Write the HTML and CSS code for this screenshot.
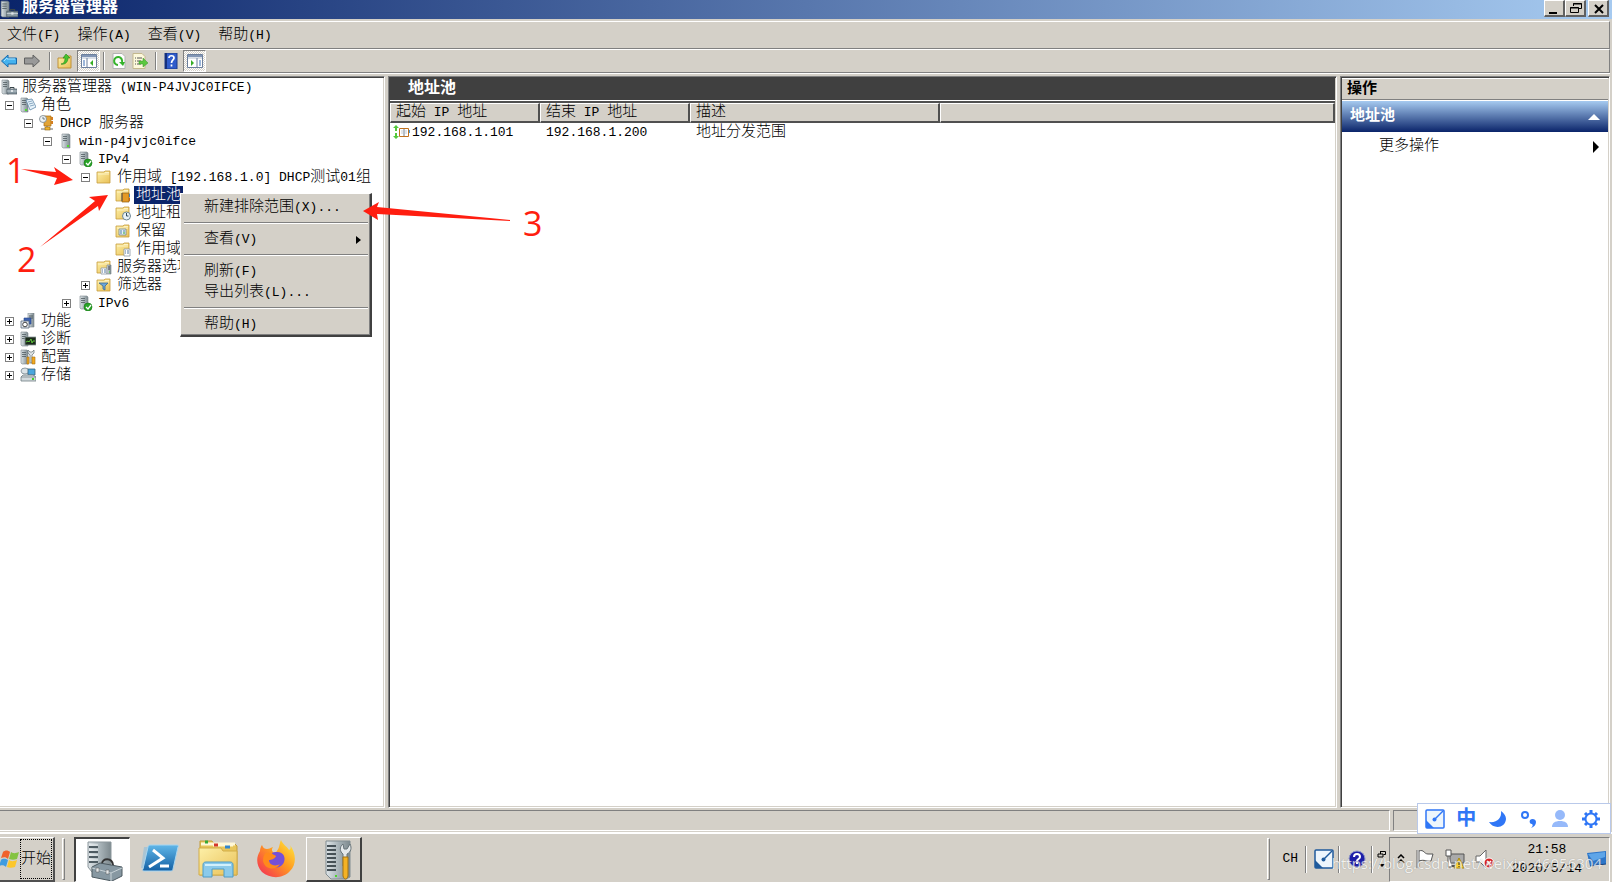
FILE: index.html
```
<!DOCTYPE html>
<html lang="zh-CN">
    <head>
        <meta charset="utf-8">
        <title>服务器管理器</title>
        <link rel="stylesheet" href="styles.css">
    </head>
    <body>
        <svg class="defs" width="0" height="0">
            <defs>
                <linearGradient id="gMetal" x1="0" x2="1"><stop offset="0" stop-color="#dfe5e8"/><stop offset=".5" stop-color="#aab5ba"/><stop offset="1" stop-color="#7d898e"/></linearGradient>
                <linearGradient id="gFolder" x1="0" y1="0" x2="1" y2="1"><stop offset="0" stop-color="#fdf0a8"/><stop offset="1" stop-color="#e9c057"/></linearGradient>
                <linearGradient id="gBlue" x1="0" y1="0" x2="0" y2="1"><stop offset="0" stop-color="#5fb6e8"/><stop offset="1" stop-color="#1460a4"/></linearGradient>
                <linearGradient id="gFox" x1="1" y1="0" x2="0" y2="1"><stop offset="0" stop-color="#fff044"/><stop offset=".45" stop-color="#ff9a1f"/><stop offset="1" stop-color="#f3245c"/></linearGradient>
            </defs>
            <symbol id="tower" viewBox="0 0 16 16">
                <path d="M4 1h7l1 1v13H5l-1-1z" fill="url(#gMetal)" stroke="#7c888d" stroke-width=".6"/>
                <path d="M5 3.500h4M5 5.500h4M5 7.500h4" stroke="#4f5b60" stroke-width=".8"/>
                <rect x="9" y="12" width="2" height="2" fill="#4fdc2e"/>
            </symbol>
            <symbol id="tower-left" viewBox="0 0 16 16">
                <path d="M1 1h6l1 1v13H2l-1-1z" fill="url(#gMetal)" stroke="#7c888d" stroke-width=".6"/>
                <path d="M2 3.500h4M2 5.500h4M2 7.500h4" stroke="#4f5b60" stroke-width=".8"/>
            </symbol>
            <symbol id="manager" viewBox="0 0 16 16">
                <use href="#tower-left"/>
                <path d="M9 10V8.500h4V10" fill="none" stroke="#39454a"/>
                <path d="M6 10h10v5H6z" fill="#8797a0" stroke="#4d5a61" stroke-width=".7"/>
                <path d="M6 12h10" stroke="#d0d8dc" stroke-width=".7"/>
                <path d="M10 11h2v2h-2z" fill="#dfe5e8"/>
            </symbol>
            <symbol id="roles" viewBox="0 0 16 16">
                <use href="#tower-left"/>
                <path d="M6 3l6-1 4 8-6 3z" fill="#e8f3fb" stroke="#5f88a8" stroke-width=".8"/>
                <path d="M8 5l4-1M9 7l4-1M10 9l4-1" stroke="#5f88a8" stroke-width=".7"/>
                <rect x="5" y="12" width="2" height="2" fill="#4fdc2e"/>
            </symbol>
            <symbol id="dhcp" viewBox="0 0 16 16">
                <path d="M5 1h7v10H5z" fill="#e2a437" stroke="#a66b13" stroke-width=".7"/>
                <path d="M12 2h2v3h-2zM12 6h2v3h-2z" fill="#d47e20"/>
                <path d="M8 11v3M2 14h12" stroke="#6b6b6b"/>
                <rect x="6" y="12" width="5" height="3" fill="#f0b32e" stroke="#8d6412" stroke-width=".6"/>
                <circle cx="4" cy="4" r="3.500" fill="#eef4f7" stroke="#74828a" stroke-width=".8"/>
                <path d="M4 2v2h2" fill="none" stroke="#40525c" stroke-width=".7"/>
            </symbol>
            <symbol id="tower-ok" viewBox="0 0 16 16">
                <path d="M3 1h7l1 1v12H4l-1-1z" fill="url(#gMetal)" stroke="#7c888d" stroke-width=".6"/>
                <path d="M4 3.500h4M4 5.500h4M4 7.500h4" stroke="#4f5b60" stroke-width=".8"/>
                <circle cx="11" cy="12" r="4" fill="#28a428" stroke="#12730f" stroke-width=".6"/>
                <path d="M9 12l2 2 3-4" fill="none" stroke="#fff" stroke-width="1.300"/>
            </symbol>
            <symbol id="folder" viewBox="0 0 16 16">
                <path d="M1 3h7l1-1h5v12H1z" fill="url(#gFolder)" stroke="#c79c3c" stroke-width=".8"/>
                <path d="M9 3.500h4M2 5h11" stroke="#fff8d2" stroke-width=".8"/>
            </symbol>
            <symbol id="pool" viewBox="0 0 16 16">
                <use href="#folder"/>
                <path d="M7 6h7v9H7z" fill="#e59a25" stroke="#8d5c10" stroke-width=".7"/>
                <path d="M6 7h2M6 9h2M6 11h2M6 13h2" stroke="#555"/>
                <path d="M14 7h1v3h-1z" fill="#3f82c4"/><path d="M14 11h1v3h-1z" fill="#c0641d"/>
            </symbol>
            <symbol id="lease" viewBox="0 0 16 16">
                <use href="#folder"/>
                <circle cx="11.500" cy="11" r="4" fill="#e8f2f8" stroke="#6d8795"/>
                <path d="M11.500 8v3h2" fill="none" stroke="#304b5c"/>
            </symbol>
            <symbol id="reserve" viewBox="0 0 16 16">
                <use href="#folder"/>
                <path d="M4 6h7v6H4z" fill="#e7f0f4" stroke="#71858f" stroke-width=".8"/>
                <path d="M5 8h2M8 8h2M5 10h2" stroke="#4a7eb0"/><path d="M8 10h2" stroke="#2ca12c"/>
            </symbol>
            <symbol id="options" viewBox="0 0 16 16">
                <use href="#folder"/>
                <path d="M9 8h6v7H9z" fill="#fff" stroke="#8b97a3" stroke-width=".8"/>
                <path d="M10 10h1M12 10h2M10 12h1M12 12h2" stroke="#5576a0"/>
            </symbol>
            <symbol id="srv-options" viewBox="0 0 16 16">
                <use href="#folder"/>
                <path d="M5 9h6v6H5z" fill="#fff" stroke="#8b97a3" stroke-width=".8"/>
                <path d="M6 11h1M8 11h2M6 13h1M8 13h2" stroke="#5576a0"/>
                <path d="M11 6h4v9h-4z" fill="url(#gMetal)" stroke="#707c81" stroke-width=".6"/>
                <path d="M12 8h2M12 10h2" stroke="#445"/><path d="M13 13h1" stroke="#3fdc2e"/>
            </symbol>
            <symbol id="filter" viewBox="0 0 16 16">
                <use href="#folder"/>
                <path d="M3 6h9L9 9v4l-2-1V9z" fill="#6aa5da" stroke="#3b698f" stroke-width=".8"/>
            </symbol>
            <symbol id="features" viewBox="0 0 16 16">
                <path d="M8 0h6v14H8z" fill="url(#gMetal)" stroke="#7c888d" stroke-width=".6"/>
                <path d="M9 3h4M9 5h4" stroke="#4f5b60"/>
                <path d="M4 5h7v6H4z" fill="#3d62b0" stroke="#29468a" stroke-width=".6"/>
                <path d="M1 8h8v7H1z" fill="#e5eaf0" stroke="#59687a" stroke-width=".8"/>
                <circle cx="5" cy="11.500" r="2.300" fill="#fff" stroke="#444"/>
            </symbol>
            <symbol id="diag" viewBox="0 0 16 16">
                <use href="#tower-left"/>
                <path d="M5 6h11v8H5z" fill="#1c2b1c" stroke="#8b979b" stroke-width=".8"/>
                <path d="M6 11l2-1 1 1 2-3 1 4 1-2h2" fill="none" stroke="#62d03e" stroke-width=".9"/>
            </symbol>
            <symbol id="config" viewBox="0 0 16 16">
                <use href="#tower-left"/>
                <path d="M8 1v3l2 2v8h2V6l2-2V1l-2 2h-2z" fill="#dde3e6" stroke="#667277" stroke-width=".7"/>
                <path d="M7 8h2v7H7zM12 8h3v7h-3z" fill="#f1a91e" stroke="#a87010" stroke-width=".6"/>
            </symbol>
            <symbol id="storage" viewBox="0 0 16 16">
                <ellipse cx="5" cy="4" rx="4" ry="3" fill="#dbe3e7" stroke="#788890" stroke-width=".8"/>
                <path d="M8 2h7v6H8z" fill="#4aa6dd" stroke="#35627f" stroke-width=".8"/>
                <path d="M1 10l2-2h10l3 2v4H1z" fill="#d4dbde" stroke="#707d83" stroke-width=".8"/>
                <path d="M1 10h15" stroke="#707d83" stroke-width=".7"/><rect x="12" y="11" width="2" height="2" fill="#44cf2a"/>
            </symbol>
            <symbol id="panel" viewBox="0 0 16 16">
                <path d="M.5 1.500h15v13H.5z" fill="#fff" stroke="#6c7f9c"/>
                <path d="M1 2h14v2H1z" fill="#8296b5"/><path d="M1 5h14" stroke="#b4c0d2"/>
            </symbol>
            <symbol id="pen" viewBox="0 0 20 20">
                <rect x="1" y="1" width="18" height="18" rx="1" fill="#edf5fc" stroke="currentColor" stroke-width="1.500"/>
                <path d="M1 11l8 8H1z" fill="currentColor"/>
                <path d="M9 11l9-9" stroke="currentColor" stroke-width="1.500"/><circle cx="9.500" cy="10.500" r="2" fill="currentColor"/>
            </symbol>
        </svg>

        <header class="titlebar">
            <svg class="icon18"><use href="#manager"/></svg>
            <h1>服务器管理器</h1>
            <button class="win" aria-label="最小化"><svg width="16" height="13"><path d="M2 11h8" stroke="#000" stroke-width="2"/></svg></button>
            <button class="win" aria-label="还原"><svg width="16" height="13"><path d="M5.500 4V1.500h8v5H10M5 2h9" fill="none" stroke="#000"/><path d="M2.500 5.500h8v5h-8zM2 6h9" fill="none" stroke="#000"/></svg></button>
            <button class="win close" aria-label="关闭"><svg width="16" height="13"><path d="M4 3l8 8M12 3l-8 8" stroke="#000" stroke-width="2"/></svg></button>
        </header>

        <nav class="menubar">
            <button>文件<span class="en">(F)</span></button>
            <button>操作<span class="en">(A)</span></button>
            <button>查看<span class="en">(V)</span></button>
            <button>帮助<span class="en">(H)</span></button>
        </nav>

        <div class="toolbar">
            <button class="tool nav" aria-label="后退"><svg viewBox="0 0 16 16"><path d="M.5 8L7 2v3h8.500v6H7v3z" fill="#45b2ee" stroke="#1668ac"/><path d="M3 8l3-3v1h8" fill="none" stroke="#a8e2ff"/></svg></button>
            <button class="tool nav" aria-label="前进"><svg viewBox="0 0 16 16"><path d="M15.500 8L9 2v3H.5v6H9v3z" fill="#999" stroke="#606060"/></svg></button>
            <i class="bar"></i>
            <button class="tool" aria-label="向上"><svg viewBox="0 0 16 16"><path d="M1 5h6l1-2h6v12H1z" fill="url(#gFolder)" stroke="#c09038"/><path d="M4 11c3 0 4-3 4-6H6l3-4 4 4h-2c0 4-3 7-7 6z" fill="#46c52e" stroke="#26851b" stroke-width=".6"/></svg></button>
            <button class="tool on" aria-label="显示控制台树"><svg viewBox="0 0 16 16"><use href="#panel"/><path d="M6 5v9" stroke="#6c7f9c"/><path d="M2 8h2M2 10h2M2 12h2" stroke="#3b6fb5"/><path d="M12 7v6l-3-3z" fill="#37ad24"/></svg></button>
            <i class="bar"></i>
            <button class="tool" aria-label="刷新"><svg viewBox="0 0 16 16"><path d="M2 .5h9l3 3v12H2z" fill="#fdfdfd" stroke="#b3b3b3"/><path d="M7 12a4 4 0 1 1 4-3" fill="none" stroke="#35b32b" stroke-width="2"/><path d="M8 9h6l-2 4z" fill="#35b32b"/></svg></button>
            <button class="tool" aria-label="导出列表"><svg viewBox="0 0 16 16"><path d="M1 .5h9l3 3v12H1z" fill="#fdf9dc" stroke="#c4b98e"/><path d="M3 5h1M5 5h5M3 8h1M5 8h4M3 11h1M5 11h4" stroke="#555"/><path d="M7 8h4V5l5 5-5 4v-3H7z" fill="#5cc840" stroke="#37962b" stroke-width=".5"/></svg></button>
            <i class="bar"></i>
            <button class="tool" aria-label="帮助"><svg viewBox="0 0 16 16"><path d="M2 0h12v16H2z" fill="#2f5bcb" stroke="#1c3a8a"/><path d="M3 0v16" stroke="#15307c" stroke-width="2"/><path d="M6 5c0-3 5-3 5 0 0 2-2.500 2-2.500 5M8.500 11.500v2" fill="none" stroke="#fff" stroke-width="1.700"/></svg></button>
            <button class="tool on" aria-label="显示操作窗格"><svg viewBox="0 0 16 16"><use href="#panel"/><path d="M10 5v9" stroke="#6c7f9c"/><path d="M12 8h2M12 10h2M12 12h2" stroke="#3b6fb5"/><path d="M4 7v6l3-3z" fill="#37ad24"/></svg></button>
        </div>

        <main class="work">
            <section class="pane tree">
                <ul class="root">
                    <li><div class="node top"><svg class="ico"><use href="#manager"/></svg><span class="label">服务器管理器<span class="en"> (WIN-P4JVJC0IFCE)</span></span></div></li>
                    <li><div class="node"><button class="exp minus" aria-label="折叠"></button><svg class="ico"><use href="#roles"/></svg><span class="label">角色</span></div>
                        <ul>
                            <li><div class="node"><button class="exp minus" aria-label="折叠"></button><svg class="ico"><use href="#dhcp"/></svg><span class="label"><span class="en">DHCP </span>服务器</span></div>
                                <ul>
                                    <li><div class="node"><button class="exp minus" aria-label="折叠"></button><svg class="ico"><use href="#tower"/></svg><span class="label"><span class="en">win-p4jvjc0ifce</span></span></div>
                                        <ul>
                                            <li><div class="node"><button class="exp minus" aria-label="折叠"></button><svg class="ico"><use href="#tower-ok"/></svg><span class="label"><span class="en">IPv4</span></span></div>
                                                <ul>
                                                    <li><div class="node"><button class="exp minus" aria-label="折叠"></button><svg class="ico"><use href="#folder"/></svg><span class="label">作用域<span class="en"> [192.168.1.0] DHCP</span>测试<span class="en">01</span>组</span></div>
                                                        <ul>
                                                            <li><div class="node"><i class="noexp"></i><svg class="ico"><use href="#pool"/></svg><span class="label selected">地址池</span></div></li>
                                                            <li><div class="node"><i class="noexp"></i><svg class="ico"><use href="#lease"/></svg><span class="label">地址租用</span></div></li>
                                                            <li><div class="node"><i class="noexp"></i><svg class="ico"><use href="#reserve"/></svg><span class="label">保留</span></div></li>
                                                            <li><div class="node"><i class="noexp"></i><svg class="ico"><use href="#options"/></svg><span class="label">作用域选项</span></div></li>
                                                        </ul>
                                                    </li>
                                                    <li><div class="node"><i class="noexp"></i><svg class="ico"><use href="#srv-options"/></svg><span class="label">服务器选项</span></div></li>
                                                    <li><div class="node"><button class="exp" aria-label="展开"></button><svg class="ico"><use href="#filter"/></svg><span class="label">筛选器</span></div></li>
                                                </ul>
                                            </li>
                                            <li><div class="node"><button class="exp" aria-label="展开"></button><svg class="ico"><use href="#tower-ok"/></svg><span class="label"><span class="en">IPv6</span></span></div></li>
                                        </ul>
                                    </li>
                                </ul>
                            </li>
                        </ul>
                    </li>
                    <li><div class="node"><button class="exp" aria-label="展开"></button><svg class="ico"><use href="#features"/></svg><span class="label">功能</span></div></li>
                    <li><div class="node"><button class="exp" aria-label="展开"></button><svg class="ico"><use href="#diag"/></svg><span class="label">诊断</span></div></li>
                    <li><div class="node"><button class="exp" aria-label="展开"></button><svg class="ico"><use href="#config"/></svg><span class="label">配置</span></div></li>
                    <li><div class="node"><button class="exp" aria-label="展开"></button><svg class="ico"><use href="#storage"/></svg><span class="label">存储</span></div></li>
                </ul>
            </section>

            <section class="pane list">
                <h2 class="list-title">地址池</h2>
                <table>
                    <colgroup><col class="c-ip"><col class="c-ip"><col class="c-desc"><col></colgroup>
                    <thead>
                        <tr><th>起始<span class="en"> IP </span>地址</th><th>结束<span class="en"> IP </span>地址</th><th>描述</th><th></th></tr>
                    </thead>
                    <tbody>
                        <tr>
                            <td class="first"><svg width="18" height="16" viewBox="0 0 18 16"><path d="M3 0l3 3H4v3H2V3H0zM3 14l3-3H4V8H2v3H0z" fill="#54c83c"/><path d="M6.500 3.500h9v8h-9z" fill="#fff" stroke="#c0701c"/><path d="M11 4v7" stroke="#6f7f8f"/><path d="M8 6h2M8 8h2M12 6h2M12 8h2" stroke="#c3ccd4"/><path d="M16 5h1v3h-1z" fill="#3f9be0"/></svg><span class="en">192.168.1.101</span></td>
                            <td><span class="en">192.168.1.200</span></td>
                            <td>地址分发范围</td>
                            <td></td>
                        </tr>
                    </tbody>
                </table>
            </section>

            <aside class="pane actions">
                <h2 class="actions-title">操作</h2>
                <button class="group">地址池<svg width="12" height="6"><path d="M0 6l6-6 6 6z" fill="#fff"/></svg></button>
                <button class="more">更多操作<svg width="6" height="12"><path d="M0 0l6 6-6 6z"/></svg></button>
            </aside>
        </main>

        <div class="statusbar"><div class="cell grow"></div><div class="cell side"></div></div>

        <footer class="taskbar">
            <button class="start"><svg width="20" height="20" viewBox="0 0 20 20"><path d="M3 3c2-2 5-2 7 0L8 10C6 8 4 8 1 9z" fill="#f0622c"/><path d="M11 3c3 2 5 1 8 0l-2 7c-3 1-5 1-8 0z" fill="#84c341"/><path d="M1 11c2-2 5-1 7 0l-2 7c-2-2-4-2-7-1z" fill="#3f9ce0"/><path d="M9 11c3 2 5 1 8 0l-2 7c-3 1-6 1-8 0z" fill="#fcc72c"/></svg><span>开始</span></button>
            <i class="grip"></i>
            <button class="app active" aria-label="服务器管理器">
                <svg width="40" height="40" viewBox="0 0 40 40"><path d="M4 1h23v30H8l-4-5z" fill="url(#gMetal)" stroke="#8b969b"/><path d="M5 6h9M5 11h9M5 16h9M5 21h9" stroke="#4f5c63" stroke-width="2"/><path d="M5 4h9M5 9h9M5 14h9M5 19h9" stroke="#eef2f4"/><path d="M18 23c0-6 10-7 11 1" fill="none" stroke="#333" stroke-width="2"/><path d="M8 26l8-4 22 4v9l-10 5L8 36z" fill="#8798a2" stroke="#4d5a61"/><path d="M8 27l19 5 11-5M27 32v8" fill="none" stroke="#c7d1d6"/><path d="M12 27h3v4h-3zM22 29h3v4h-3z" fill="#e3e8ea" stroke="#555" stroke-width=".5"/></svg>
            </button>
            <button class="app" aria-label="PowerShell">
                <svg width="40" height="40" viewBox="0 0 40 40"><path d="M4 8h6L5 29H1z" fill="#7fb9e0" opacity=".5"/><path d="M10 6h27c1 0 2 1 1 2l-5 22c0 1-1 2-2 2H4c-1 0-2-1-1-2L8 8c0-1 1-2 2-2z" fill="url(#gBlue)" stroke="#a7d6f2"/><path d="M13 11l10 8-14 9" fill="none" stroke="#fff" stroke-width="3"/><path d="M20 27h9" stroke="#fff" stroke-width="3"/></svg>
            </button>
            <button class="app" aria-label="资源管理器">
                <svg width="40" height="40" viewBox="0 0 40 40"><path d="M2 2h12l2 3h21l2 2v29H2z" fill="#e8c65b" stroke="#c39d3c"/><path d="M3 5h34M15 6h20" stroke="#fff8d8" stroke-width="3"/><path d="M7 3h3" stroke="#37a835" stroke-width="3"/><path d="M16 6h4" stroke="#d3372e" stroke-width="3"/><path d="M27 8h5" stroke="#3186ce" stroke-width="3"/><path d="M1 9h22l2 3h14v24H1z" fill="url(#gFolder)" stroke="#d2ad49"/><path d="M5 38V26c0-2 1-3 3-3h24c2 0 3 1 3 3v12h-9V30H14v8z" fill="#8bcaea" stroke="#4c9cc8"/><path d="M7 26h26" stroke="#d1f0fc" stroke-width="2"/></svg>
            </button>
            <button class="app" aria-label="Firefox">
                <svg width="40" height="40" viewBox="0 0 40 40"><path d="M25 1c2 5 6 6 8 10 2-1 2-3 1-5 6 8 7 19 0 26-7 8-20 8-28 1C0 27 0 18 4 12c0-2 1-5 2-6 1 3 3 4 5 4 2 0 3-1 6-2-2 3-1 5 2 6 5-4 4-9 6-13z" fill="url(#gFox)"/><path d="M20 13c7-1 10 5 8 10-2 6-11 8-15 2-2-4 0-6 0-6 2 1 5 0 7-2-2 0-4-1-4-3 1-1 3-1 4-1z" fill="#7650d8"/><path d="M10 14c4-1 6 1 10 3-1 3-5 4-7 4 0 5 6 7 11 4-4 7-15 6-17-3 0-4 1-7 3-8z" fill="#ff8a1c"/></svg>
            </button>
            <button class="app raised" aria-label="管理工具">
                <svg width="40" height="40" viewBox="0 0 40 40"><path d="M11 1h24v36l-4 2H16l-5-5z" fill="url(#gMetal)" stroke="#818d92"/><path d="M12 6h9M12 10h9M12 14h9M12 18h9M12 22h9M12 26h9M12 30h9" stroke="#465157" stroke-width="2"/><path d="M28 4c-4 3-3 8 0 10v12h4V14c4-2 5-6 3-10l-3 5h-3z" fill="#e4e8ea" stroke="#687479"/><path d="M28 17h5v19c-1 4-4 4-5 0z" fill="#f4b224" stroke="#a37312"/><path d="M20 36h2" stroke="#4ad72c" stroke-width="2"/></svg>
            </button>
            <div class="lang">
                <i class="grip"></i>
                <span class="en ch">CH</span>
                <i class="thin"></i>
                <svg class="pen-icon" width="20" height="20"><use href="#pen"/></svg>
                <i class="thin"></i>
                <svg class="q" width="18" height="18" viewBox="0 0 18 18"><circle cx="9" cy="9" r="8" fill="#1e1ea8" stroke="#8d96c8"/><path d="M6 7c0-4 6-4 6 0 0 2-3 2-3 4M9 12v2" fill="none" stroke="#fff" stroke-width="2"/></svg>
                <i class="thin"></i>
                <svg class="opts" width="10" height="18" viewBox="0 0 10 18"><path d="M3.500 1.500h5v3h-2M1 4h5v3H1zM3.500 1v3" fill="none" stroke="#000"/><path d="M2 14h6l-3 3z"/></svg>
            </div>
            <div class="tray">
                <svg width="8" height="11" viewBox="0 0 8 11"><path d="M1 4l3-3 3 3M1 9l3-3 3 3" fill="none" stroke="#000" stroke-width="1.500"/></svg>
                <svg width="20" height="20" viewBox="0 0 20 20"><path d="M3 1v18" stroke="#666" stroke-width="3"/><path d="M4 2c5-2 5 3 9 3h5l-2 7c-5 1-6-2-12 0z" fill="#fff" stroke="#555"/><path d="M3 1v18" stroke="#fff"/></svg>
                <svg width="20" height="20" viewBox="0 0 20 20"><path d="M5 5h14v9H5z" fill="#aaa" stroke="#555"/><path d="M6 17h12M12 14v3" stroke="#555" stroke-width="2"/><path d="M1 1h5v6H1zM3 7v11h4" fill="#fff" stroke="#555"/><path d="M14 9l5 10H9z" fill="#ffd42e" stroke="#a88810"/><path d="M14 12v4M14 17v1" stroke="#222"/></svg>
                <svg width="20" height="20" viewBox="0 0 20 20"><path d="M1 7h4l6-6v18l-6-6H1z" fill="#fff" stroke="#666"/><circle cx="14" cy="14" r="5" fill="#d92323" stroke="#fff"/><path d="M12 12l4 4M16 12l-4 4" stroke="#fff" stroke-width="1.500"/></svg>
                <div class="clock en"><div>21:58</div><div>2020/5/14</div></div>
                <svg class="desk" width="20" height="16" viewBox="0 0 20 16"><path d="M0 2l19-2v13L3 15z" fill="#2d75c8"/><path d="M1 3l17-2v5L6 10z" fill="#5ea5e8"/><path d="M3 15l16-2" stroke="#16427e"/></svg>
            </div>
        </footer>

        <!-- floating layers -->
        <div class="context">
            <button>新建排除范围<span class="en">(X)...</span></button>
            <hr>
            <button>查看<span class="en">(V)</span><svg width="5" height="8"><path d="M0 0l5 4-5 4z"/></svg></button>
            <hr>
            <button>刷新<span class="en">(F)</span></button>
            <button>导出列表<span class="en">(L)...</span></button>
            <hr>
            <button>帮助<span class="en">(H)</span></button>
        </div>

        <svg class="notes" width="560" height="290">
            <g fill="#ff1e10">
                <path d="M21 169l35 3-2-5 19 13-19 5 3-7z"/>
                <path d="M40 247l55-46-6-4 19-2-9 16-1-5z"/>
                <path d="M363 211l16-9-2 5 133 13v1l-133-7 1 6z"/>
                <text x="6" y="183">1</text>
                <text x="17" y="272">2</text>
                <text x="523" y="236">3</text>
            </g>
        </svg>

        <div class="ime">
            <svg width="20" height="20"><use href="#pen"/></svg>
            <span>中</span>
            <svg width="20" height="20" viewBox="0 0 20 20"><path d="M14 2c1 7-4 12-12 11 4 7 16 7 17-3 0-3-2-6-5-8z" fill="currentColor"/></svg>
            <svg width="20" height="20" viewBox="0 0 20 20"><circle cx="6" cy="6" r="3" fill="none" stroke="currentColor" stroke-width="2"/><path d="M11 11c2-2 6-1 6 2s-2 5-5 6c2-2 2-3 1-4-2 0-3-2-2-4z" fill="currentColor"/></svg>
            <svg class="faded" width="20" height="20" viewBox="0 0 20 20"><circle cx="10" cy="6" r="5" fill="currentColor"/><path d="M2 18c0-4 3-6 8-6s8 2 8 6z" fill="currentColor"/></svg>
            <svg width="20" height="20" viewBox="0 0 20 20"><circle cx="10" cy="10" r="5.500" fill="none" stroke="currentColor" stroke-width="2"/><path d="M10 1v4M10 15v4M1 10h4M15 10h4M4 4l2 2M14 14l2 2M16 4l-2 2M4 16l2-2" stroke="currentColor" stroke-width="3"/></svg>
        </div>

        <div class="watermark">https://blog.csdn.net/weixin_46056304</div>
    </body>
</html>
```
FILE: styles.css
```
* {
    box-sizing: border-box;
}
body {
    margin: 0;
    height: 100vh;
    position: relative;
    overflow: hidden;
    display: flex;
    flex-direction: column;
    background-color: #d4d0c8;
    color: #000;
    font-family: "Liberation Mono", "Noto Sans CJK SC", monospace;
    font-size: 15px;
    font-weight: 300;
    line-height: 18px;
    white-space: nowrap;
}
h1, h2, ul {
    margin: 0;
    padding: 0;
    font-size: 16px;
}
ul {
    font-size: 15px;
    list-style: none;
}
button {
    margin: 0;
    padding: 0;
    border: none;
    background: none;
    color: inherit;
    font: inherit;
    text-align: left;
}
svg {
    display: block;
    flex: none;
}
.defs {
    position: absolute;
}
.en {
    font-size: 13px;
    white-space: pre;
}

/* title bar */
.titlebar {
    display: flex;
    height: 19px;
    padding-right: 3px;
    background: linear-gradient(to right, #0a246a, #a6caf0);
    color: #fff;
}
.titlebar h1 {
    flex: 1;
    padding-left: 4px;
    line-height: 16px;
}
.icon18 {
    width: 18px;
    height: 18px;
}
.win {
    width: 21px;
    height: 17px;
    padding-left: 2px;
    background-color: #d4d0c8;
    border: 1px solid #fff;
    border-right: 2px solid #606060;
    border-bottom: 2px solid #606060;
}
.close {
    margin-left: 2px;
}

/* menu bar and toolbar */
.menubar, .toolbar {
    display: flex;
    margin-right: 2px;
    border-top: 1px solid #fff;
    border-right: 1px solid #808080;
    border-bottom: 1px solid #808080;
    align-items: center;
}
.menubar {
    height: 28px;
    margin-top: 2px;
}
.menubar button {
    padding: 1px 10px 0 7px;
}
.toolbar {
    height: 24px;
    box-shadow: 0 1px #fff;
}
.tool {
    width: 21px;
    height: 22px;
    padding: 3px 1px;
}
.tool svg {
    width: 16px;
    height: 16px;
}
.nav {
    width: 23px;
}
.on {
    width: 23px;
    padding: 2px 3px;
    border: 1px solid #808080;
    border-right-color: #fff;
    border-bottom-color: #fff;
    background: repeating-conic-gradient(#fff 0 25%, #d4d0c8 0 50%) 0 0 / 2px 2px;
}
.bar {
    width: 2px;
    height: 18px;
    margin: 0 5px 0 3px;
    border-left: 1px solid #808080;
    border-right: 1px solid #fff;
}

/* three panes */
.work {
    flex: 1;
    min-height: 0;
    display: grid;
    grid-template-columns: 385px 1fr 270px;
    gap: 3px;
    margin-top: 3px;
    padding-right: 2px;
}
.pane {
    min-width: 0;
    overflow: hidden;
    background-color: #fff;
    border: 1px solid #808080;
    border-right-color: #fff;
    border-bottom-color: #fff;
    box-shadow: inset 1px 1px #404040, inset -1px -1px #d4d0c8;
}
.tree {
    border-left: none;
    box-shadow: inset 0 1px #404040, inset -1px -1px #d4d0c8;
}
.root {
    padding: 1px 0 0 5px;
}
.root ul {
    padding-left: 19px;
}
.node {
    display: flex;
    align-items: center;
    height: 18px;
}
.top {
    margin-left: -4px;
}
.top .ico {
    margin-left: 0;
}
.ico {
    width: 16px;
    height: 16px;
    margin: 0 3px 0 6px;
}
.label {
    height: 18px;
    padding: 0 2px;
    line-height: 20px;
}
.selected {
    background-color: #0a246a;
    color: #fff;
}
.exp, .noexp {
    width: 9px;
    height: 9px;
    flex: none;
}
.exp {
    border: 1px solid #808080;
    background:
        linear-gradient(#000, #000) center / 5px 1px no-repeat,
        linear-gradient(#000, #000) center / 1px 5px no-repeat;
}
.minus {
    background: linear-gradient(#000, #000) center / 5px 1px no-repeat;
}

/* address list */
.list {
    padding: 1px;
}
.list-title {
    height: 22px;
    padding-left: 18px;
    background-color: #404040;
    color: #fff;
    line-height: 22px;
}
.list table {
    width: 100%;
    table-layout: fixed;
    border-collapse: separate;
    border-spacing: 0;
    border-top: 2px solid #505050;
    margin-top: 1px;
}
.c-ip {
    width: 150px;
}
.c-desc {
    width: 250px;
}
.list th {
    height: 20px;
    padding: 1px 5px 0;
    background-color: #d4d0c8;
    border: 1px solid #fff;
    border-right: 2px solid #505050;
    border-bottom: 2px solid #505050;
    font-weight: inherit;
    line-height: 16px;
    text-align: left;
}
.list td {
    height: 20px;
    padding: 0 6px;
}
.list .first {
    display: flex;
    align-items: center;
    gap: 1px;
    padding-left: 3px;
}

/* action pane */
.actions {
    display: flex;
    flex-direction: column;
    padding: 2px 1px;
}
.actions-title {
    height: 21px;
    padding-left: 5px;
    background-color: #d4d0c8;
    border-bottom: 1px solid #808080;
    font-size: 15px;
    line-height: 21px;
}
.group, .more {
    display: flex;
    align-items: center;
    justify-content: space-between;
    height: 30px;
    padding: 0 8px;
}
.group {
    height: 31px;
    margin-top: 1px;
    background: linear-gradient(#a6caf0, #0a246a);
    color: #fff;
    font-weight: bold;
}
.more {
    padding: 0 9px 0 37px;
}

/* status bar */
.statusbar {
    display: flex;
    gap: 3px;
    height: 25px;
    padding: 2px 2px 1px 0;
    border-bottom: 1px solid #fff;
}
.cell {
    border: 1px solid #808080;
    border-left-width: 0;
    border-right-color: #fff;
    border-bottom-color: #fff;
}
.grow {
    flex: 1;
}
.side {
    width: 217px;
    border-left-width: 1px;
}

/* taskbar */
.taskbar {
    display: flex;
    align-items: center;
    height: 49px;
    padding: 2px 2px 0 0;
    border-top: 1px solid #fff;
}
.start {
    display: flex;
    align-items: center;
    width: 55px;
    height: 45px;
    border-top: 1px solid #fff;
    border-right: 2px solid #505050;
    border-bottom: 2px solid #505050;
}
.start span {
    padding: 11px 0 9px;
    border: 1px dotted #000;
}
.grip {
    width: 3px;
    height: 42px;
    margin: 0 9px 0 7px;
    border: 1px solid #fff;
    border-right-color: #808080;
    border-bottom-color: #808080;
}
.app {
    width: 56px;
    height: 45px;
    padding: 2px 8px;
    margin-right: 2px;
}
.active {
    background-color: #fff;
    border: 1px solid #fff;
    border-top: 2px solid #404040;
    border-left: 2px solid #404040;
}
.raised {
    border: 1px solid #fff;
    border-right: 2px solid #404040;
    border-bottom: 2px solid #404040;
}
.lang {
    display: flex;
    align-items: center;
    height: 45px;
    margin-left: auto;
}
.ch {
    margin: 0 7px 0 3px;
}
.lang .thin {
    width: 2px;
    height: 27px;
    border-left: 1px solid #808080;
    border-right: 1px solid #fff;
}
.pen-icon {
    margin: 0 4px 0 7px;
    color: #1f5a9c;
}
.q {
    margin: 0 5px 0 8px;
}
.opts {
    margin: 0 2px 0 4px;
}
.tray {
    display: flex;
    align-items: center;
    gap: 10px;
    width: 221px;
    height: 45px;
    padding: 0 2px 0 7px;
    border: 1px solid #808080;
    border-right-color: #fff;
    border-bottom-color: #fff;
}
.clock {
    margin-left: auto;
    text-align: center;
    line-height: 19px;
}
.desk {
    margin-left: -5px;
}

/* context menu */
.context {
    position: absolute;
    left: 180px;
    top: 193px;
    width: 192px;
    padding: 3px 2px 0;
    display: flex;
    flex-direction: column;
    background-color: #d4d0c8;
    border: 1px solid #fff;
    border-right: 2px solid #404040;
    border-bottom: 2px solid #404040;
    box-shadow: inset -1px -1px #808080;
}
.context button {
    display: flex;
    align-items: center;
    height: 21px;
    padding: 0 7px 0 21px;
}
.context svg {
    margin-left: auto;
}
.context hr {
    width: 184px;
    margin: 4px 1px 5px;
    border: none;
    border-top: 1px solid #808080;
    border-bottom: 1px solid #fff;
}

/* numbered arrows */
.notes {
    position: absolute;
    left: 0;
    top: 0;
    font-family: "Open Sans", sans-serif;
    font-size: 34px;
    font-weight: normal;
    pointer-events: none;
}

/* input method bar */
.ime {
    position: absolute;
    right: 1px;
    bottom: 48px;
    width: 194px;
    height: 31px;
    padding: 0 9px 0 7px;
    display: flex;
    align-items: center;
    justify-content: space-between;
    background-color: #fff;
    border: 1px solid #b9c9ea;
    color: #2f76f6;
}
.ime span {
    padding-top: 3px;
    font-size: 20px;
    font-weight: bold;
}
.faded {
    opacity: .5;
}

.watermark {
    position: absolute;
    right: 10px;
    bottom: 10px;
    color: #fff;
    opacity: .7;
    font-family: "Open Sans", sans-serif;
    font-size: 15px;
    font-weight: normal;
    text-shadow: 0 0 1px #777;
}
```
